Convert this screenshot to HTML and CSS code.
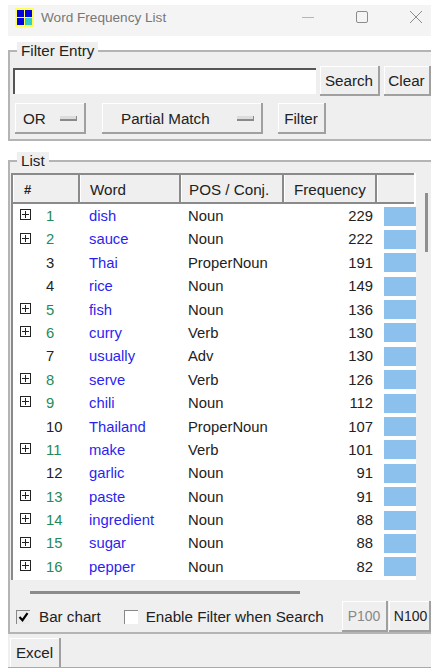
FILE: index.html
```html
<!DOCTYPE html>
<html lang="en">
<head>
<meta charset="utf-8">
<title>Word Frequency List</title>
<link rel="stylesheet" href="styles.css">
</head>
<body>
<div class="window">
  <header class="titlebar">
    <svg class="app-icon" width="19" height="19" viewBox="0 0 19 19">
      <rect width="19" height="19" fill="#ffff55"/>
      <rect x="2" y="2" width="7" height="7" fill="#0000e0"/>
      <rect x="10" y="2" width="7" height="7" fill="#0000e0"/>
      <rect x="2" y="10" width="7" height="7" fill="#0000e0"/>
      <rect x="10" y="10" width="7" height="7" fill="#33cccc"/>
    </svg>
    <span class="title">Word Frequency List</span>
    <div class="win-controls">
      <svg width="14" height="14" viewBox="0 0 14 14"><path d="M1 7.5h12" stroke="#b5b5b5" fill="none"/></svg>
      <svg width="14" height="14" viewBox="0 0 14 14"><rect x="1.5" y="1.5" width="11" height="11" rx="1.5" stroke="#8c8c8c" fill="none"/></svg>
      <svg width="14" height="14" viewBox="0 0 14 14"><path d="M1 1l12 12M13 1L1 13" stroke="#8c8c8c" fill="none"/></svg>
    </div>
  </header>

  <section class="group filter-group">
    <span class="legend">Filter Entry</span>
    <div class="row search-row">
      <input class="entry" type="text">
      <button class="btn">Search</button>
      <button class="btn">Clear</button>
    </div>
    <div class="row option-row">
      <button class="btn menu menu-or">OR<i class="menu-mark"></i></button>
      <button class="btn menu menu-match">Partial Match<i class="menu-mark"></i></button>
      <button class="btn btn-filter">Filter</button>
    </div>
  </section>

  <section class="group list-group">
    <span class="legend">List</span>
    <div class="list-body">
      <div class="tree">
        <div class="thead">
          <div class="th col-num">#</div>
          <div class="th col-word">Word</div>
          <div class="th col-pos">POS / Conj.</div>
          <div class="th col-freq">Frequency</div>
          <div class="th col-bar"></div>
        </div>
        <div class="tbody" id="rows"></div>
      </div>
      <div class="vscroll"><span class="vthumb"></span></div>
    </div>
    <div class="hscroll"></div>
    <div class="list-options">
      <label class="check"><span class="box on"><svg width="11" height="11" viewBox="0 0 11 11"><path d="M1.5 5l3 3.2 5-7" stroke="#000" stroke-width="2.2" fill="none"/></svg></span>Bar chart</label>
      <label class="check check-filter"><span class="box"></span>Enable Filter when Search</label>
      <div class="pager">
        <button class="btn page page-off">P100</button>
        <button class="btn page">N100</button>
      </div>
    </div>
  </section>

  <footer class="bottom">
    <button class="btn excel">Excel</button>
  </footer>
</div>
<script src="rows.js"></script>
</body>
</html>
```

FILE: rows.js
```js
// Fills the word table; bar width is always the full column here.
var words = [
  [1, "dish", "Noun", 229, 1], [2, "sauce", "Noun", 222, 1], [3, "Thai", "ProperNoun", 191, 0],
  [4, "rice", "Noun", 149, 0], [5, "fish", "Noun", 136, 1], [6, "curry", "Verb", 130, 1],
  [7, "usually", "Adv", 130, 0], [8, "serve", "Verb", 126, 1], [9, "chili", "Noun", 112, 1],
  [10, "Thailand", "ProperNoun", 107, 0], [11, "make", "Verb", 101, 1], [12, "garlic", "Noun", 91, 0],
  [13, "paste", "Noun", 91, 1], [14, "ingredient", "Noun", 88, 1], [15, "sugar", "Noun", 88, 1],
  [16, "pepper", "Noun", 82, 1]
];
var body = document.getElementById("rows");
words.forEach(function (w) {
  var row = document.createElement("div");
  row.className = "tr";
  var tog = w[4] ? '<span class="toggle"></span>' : "";
  row.innerHTML =
    '<div class="td col-num ' + (w[4] ? "has-kids" : "") + '"><span class="tog-slot">' + tog + "</span>" + w[0] + "</div>" +
    '<div class="td col-word">' + w[1] + "</div>" +
    '<div class="td col-pos">' + w[2] + "</div>" +
    '<div class="td col-freq">' + w[3] + "</div>" +
    '<div class="td col-bar"><span class="bar"></span></div>';
  body.appendChild(row);
});
```

FILE: styles.css
```css
* { box-sizing: border-box; }
html, body { margin: 0; height: 100%; background: #fff; }
body {
  font-family: "Liberation Sans", Arial, sans-serif;
  font-size: 15.2px;
  color: #222;
  overflow: hidden;
}
.window {
  width: 431px;
  height: 669px;
  padding: 5px 0 1px 8px;
  display: flex;
  flex-direction: column;
}
.titlebar {
  height: 31px;
  flex: none;
  background: #f4f4f4;
  display: flex;
  align-items: center;
  padding: 0 0 7px 7px;
  color: #777;
  font-size: 13.6px;
}
.app-icon { flex: none; margin-right: 7px; }
.win-controls {
  margin-left: auto;
  display: flex;
  gap: 40px;
  padding-right: 8px;
}
.win-controls svg { display: block; }

.group {
  position: relative;
  flex: none;
  background: #efefef;
  border-top: 2px solid #b4b4b4;
  border-left: 2px solid #b4b4b4;
  border-bottom: 2px solid #b4b4b4;
}
.legend {
  position: absolute;
  top: -10px;
  left: 7px;
  padding: 0 4px;
  background: #efefef;
  line-height: 18px;
}
.filter-group {
  margin-top: 14px;
  height: 91px;
  padding: 14px 0 0 3px;
}
.row { display: flex; align-items: flex-start; }
.search-row { height: 30px; }
.entry {
  width: 303px;
  height: 26px;
  margin-top: 2px;
  padding: 0;
  background: #fff;
  border: 0;
  border-top: 2px solid #555;
  border-left: 2px solid #555;
  outline: 0;
  border-radius: 0;
}
.btn {
  font: inherit;
  color: #222;
  background: #efefef;
  border: 0;
  border-right: 2px solid #a0a0a0;
  border-bottom: 2px solid #a0a0a0;
  box-shadow: inset 1px 1px 0 #fff;
  padding: 0;
  border-radius: 0;
}
.search-row .btn { height: 30px; }
.search-row .btn:nth-of-type(1) { width: 60px; margin-left: 4px; }
.search-row .btn:nth-of-type(2) { width: 47px; margin-left: 4px; }
.option-row { margin-top: 7px; padding-left: 2px; }
.option-row .btn { height: 31px; padding-top: 2px; }
.menu {
  display: flex;
  align-items: center;
}
.option-row .menu-or { width: 71px; padding-left: 8px; }
.option-row .menu-match { width: 161px; margin-left: 16px; padding-left: 19px; }
.menu-mark {
  width: 17px;
  height: 5px;
  background: #dcdcdc;
  border-bottom: 2px solid #8a8a8a;
  border-right: 1px solid #8a8a8a;
  margin-left: auto;
  margin-right: 7px;
}
.btn-filter { width: 48px; margin-left: 15px; }

.list-group {
  margin-top: 19px;
  height: 474px;
  padding: 11px 0 0 1px;
}
.list-body { display: flex; height: 407px; }
.tree {
  width: 405px;
  flex: none;
  background: #fff;
  border-left: 2px solid #8a8a8a;
}
.thead {
  display: flex;
  height: 31px;
  margin-right: 2px;
  background: #efefef;
  border-top: 2px solid #8a8a8a;
  border-bottom: 2px solid #8a8a8a;
}
.th {
  padding-top: 2px;
  line-height: 26px;
  border-right: 2px solid #8a8a8a;
  border-left: 1px solid #fff;
}
.thead .col-num { padding-left: 10px; font-weight: 700; font-size: 13px; }
.thead .col-word { padding-left: 9px; }
.thead .col-pos { padding-left: 7px; }
.thead .col-freq { padding-left: 9px; }
.thead .col-bar { border-right: 0; }
.col-num { width: 67px; flex: none; }
.col-word { width: 101px; flex: none; }
.col-pos { width: 103px; flex: none; }
.col-freq { width: 93px; flex: none; }
.col-bar { flex: 1; }
.tr { display: flex; height: 23.4px; line-height: 25.4px; font-size: 14.8px; }
.td.col-num { display: flex; padding-left: 7px; }
.td.col-num.has-kids { color: #1f8a5a; }
.tog-slot { width: 26px; height: 23.4px; flex: none; display: flex; align-items: center; }
.toggle {
  width: 11px;
  height: 11px;
  border: 1px solid #222;
  background:
    linear-gradient(#222, #222) center / 7px 1px no-repeat,
    linear-gradient(#222, #222) center / 1px 7px no-repeat;
  margin-bottom: 2px;
}
.td.col-word { color: #2b1ff0; padding-left: 9px; }
.td.col-pos { padding-left: 7px; }
.td.col-freq { text-align: right; padding-right: 4px; }
.td.col-bar { padding-left: 7px; display: flex; height: 23.4px; }
.bar { display: block; flex: 1; height: 19px; margin-top: 2.5px; background: #8bc1ec; }
.vscroll { width: 14px; flex: none; position: relative; }
.vthumb {
  position: absolute;
  left: 9px;
  top: 20px;
  width: 3px;
  height: 59px;
  background: #8f8f8f;
}
.hscroll {
  height: 3px;
  width: 270px;
  margin: 11px 0 0 19px;
  background: #8a8a8a;
}
.list-options {
  display: flex;
  align-items: center;
  height: 31px;
  margin-top: 7px;
  padding-left: 5px;
}
.check { display: flex; align-items: center; }
.box {
  width: 14px;
  height: 14px;
  background: #fff;
  border-top: 1px solid #888;
  border-left: 1px solid #888;
  margin-right: 8px;
  display: flex;
  align-items: center;
  justify-content: center;
}
.box.on { background: #ececec; margin-right: 9px; }
.check-filter { margin-left: 23px; }
.pager { margin-left: auto; display: flex; gap: 1px; font-size: 14px; }
.page { width: 46px; height: 31px; }
.page + .page { width: 42px; padding-left: 3px; }
.page-off { color: #888; }

.bottom {
  flex: 1;
  background: #efefef;
  padding: 4px 0 0 2px;
  border-bottom: 1px solid #aaa;
}
.excel { display: block; width: 51px; height: 29px; border-bottom: 0; }
```
